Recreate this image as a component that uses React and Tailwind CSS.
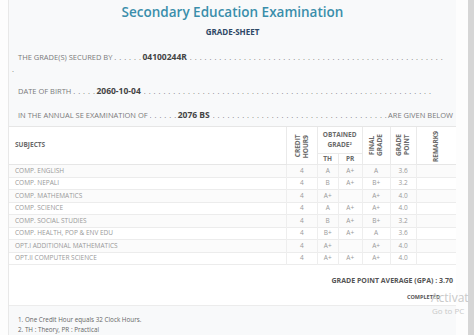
import React from "react";

const subjects = [
  { name: "COMP. ENGLISH", ch: 4, th: "A", pr: "A+", fg: "A", gp: "3.6" },
  { name: "COMP. NEPALI", ch: 4, th: "B", pr: "A+", fg: "B+", gp: "3.2" },
  { name: "COMP. MATHEMATICS", ch: 4, th: "A+", pr: "", fg: "A+", gp: "4.0" },
  { name: "COMP. SCIENCE", ch: 4, th: "A", pr: "A+", fg: "A+", gp: "4.0" },
  { name: "COMP. SOCIAL STUDIES", ch: 4, th: "B", pr: "A+", fg: "B+", gp: "3.2" },
  { name: "COMP. HEALTH, POP & ENV EDU", ch: 4, th: "B+", pr: "A+", fg: "A", gp: "3.6" },
  { name: "OPT.I ADDITIONAL MATHEMATICS", ch: 4, th: "A+", pr: "", fg: "A+", gp: "4.0" },
  { name: "OPT.II COMPUTER SCIENCE", ch: 4, th: "A+", pr: "A+", fg: "A+", gp: "4.0" },
];

function Dots({ n = 6, fill }) {
  return (
    <span
      className={`tracking-[0.5px] overflow-hidden whitespace-nowrap ${fill ? "flex-1 min-w-0" : ""}`}
    >
      {". ".repeat(n)}
    </span>
  );
}

function Vert({ children }) {
  return (
    <div className="flex justify-center">
      <span className="[writing-mode:vertical-rl] rotate-180 text-center leading-[8px]">
        {children}
      </span>
    </div>
  );
}

export default function App() {
  return (
    <div className="relative w-[474px] h-[335px] overflow-hidden bg-[#fdfdfd] flex font-['Open_Sans',sans-serif]">
      <div className="w-[8px] shrink-0" />

      {/* Grade sheet card */}
      <div className="w-[448px] shrink-0 border-l border-[#e8e8e8] flex flex-col">
        {/* Header */}
        <div className="h-[130px] bg-[#f8f9fa] border-b border-[#e6e6e6] flex flex-col pt-[3px] text-[#7a7a7a] text-[7.5px]">
          <h1 className="text-center text-[13.5px] leading-[18px] font-semibold text-[#3a8eab]">
            Secondary Education Examination
          </h1>
          <p className="text-center mt-[5px] text-[8px] leading-[12px] font-bold text-[#2e4866]">
            GRADE-SHEET
          </p>

          <div className="mt-[13px] leading-[12px] pl-[9px] pr-[3px] flex whitespace-nowrap">
            <span>THE GRADE(S) SECURED BY&nbsp;</span>
            <Dots />
            <b className="text-[#444] text-[8.5px] mx-[1px]">04100244R</b>
            <span>&nbsp;</span>
            <Dots n={52} fill />
          </div>
          <div className="leading-[12px] pl-[3px]">.</div>

          <div className="mt-[10px] leading-[12px] pl-[9px] pr-[3px] flex whitespace-nowrap">
            <span>DATE OF BIRTH&nbsp;</span>
            <Dots n={5} />
            <b className="text-[#444] text-[8.5px] mx-[1px]">2060-10-04</b>
            <span>&nbsp;</span>
            <Dots n={59} fill />
          </div>

          <div className="mt-[12px] leading-[12px] pl-[9px] pr-[3px] flex whitespace-nowrap">
            <span>IN THE ANNUAL SE EXAMINATION OF&nbsp;</span>
            <Dots />
            <b className="text-[#444] text-[8.5px] mx-[1px]">2076 BS</b>
            <span>&nbsp;</span>
            <Dots n={36} fill />
            <span className="shrink-0">ARE GIVEN BELOW</span>
          </div>
        </div>

        {/* Table */}
        <table className="table-fixed border-collapse bg-white text-[6.5px] text-[#999]">
          <colgroup>
            <col className="w-[278px]" />
            <col className="w-[31px]" />
            <col className="w-[21px]" />
            <col className="w-[24px]" />
            <col className="w-[28px]" />
            <col className="w-[26px]" />
            <col className="w-[40px]" />
          </colgroup>
          <thead className="font-bold text-[#6a6a6a] text-[6.5px]">
            <tr className="h-[27px]">
              <th rowSpan={2} className="text-left pl-[6px] border-b border-[#e6e6e6]">
                SUBJECTS
              </th>
              <th rowSpan={2} className="border border-[#eaeaea] border-t-0">
                <Vert>
                  CREDIT<br />HOURS<sup className="text-[4px]">1</sup>
                </Vert>
              </th>
              <th colSpan={2} className="border border-[#eaeaea] border-t-0 leading-[10px] font-bold">
                OBTAINED
                <br />
                GRADE<sup className="text-[4px]">2</sup>
              </th>
              <th rowSpan={2} className="border border-[#eaeaea] border-t-0">
                <Vert>
                  FINAL<br />GRADE
                </Vert>
              </th>
              <th rowSpan={2} className="border border-[#eaeaea] border-t-0">
                <Vert>
                  GRADE<br />POINT
                </Vert>
              </th>
              <th rowSpan={2} className="border-b border-[#e6e6e6]">
                <Vert>
                  REMARKS<sup className="text-[4px]">3</sup>
                </Vert>
              </th>
            </tr>
            <tr className="h-[11px]">
              <th className="border border-[#eaeaea] font-bold">TH</th>
              <th className="border border-[#eaeaea] font-bold">PR</th>
            </tr>
          </thead>
          <tbody>
            {subjects.map((s, i) => (
              <tr
                key={s.name}
                className={`h-[12.5px] border-b border-[#ececec] ${i % 2 === 0 ? "bg-[#fbfbfb]" : "bg-white"}`}
              >
                <td className="pl-[6px] whitespace-nowrap">{s.name}</td>
                <td className="text-center border-x border-[#eeeeee]">{s.ch}</td>
                <td className="text-center border-x border-[#eeeeee]">{s.th}</td>
                <td className="text-center border-x border-[#eeeeee]">{s.pr}</td>
                <td className="text-center border-x border-[#eeeeee]">{s.fg}</td>
                <td className="text-center border-x border-[#eeeeee]">{s.gp}</td>
                <td />
              </tr>
            ))}
          </tbody>
        </table>

        {/* Summary */}
        <div className="bg-white pt-[12px] pb-[4px] pr-[3px] text-right font-bold text-[#555]">
          <p className="text-[7px] leading-[8px]">GRADE POINT AVERAGE (GPA) : 3.70</p>
          <p className="mt-[8px] pr-[13px] text-[5.5px] leading-[8px]">COMPLETED</p>
        </div>

        {/* Footnotes */}
        <div className="flex-1 bg-[#f8f9fa] border-t border-[#ececec] pt-[9px] pl-[9px] text-[6.3px] leading-[10px] text-[#666]">
          <p>1. One Credit Hour equals 32 Clock Hours.</p>
          <p>2. TH : Theory, PR : Practical</p>
        </div>
      </div>

      <div className="w-[12px] shrink-0" />
      <div className="w-[6px] shrink-0 bg-[#d6d6d6]" />

      {/* OS watermark overlay */}
      <div className="absolute left-[431px] top-[292px] text-[#c9c9c9] leading-none">
        <p className="text-[12px]">Activat</p>
        <p className="text-[8px] mt-[3px] pl-[1px]">Go to PC</p>
      </div>
    </div>
  );
}
